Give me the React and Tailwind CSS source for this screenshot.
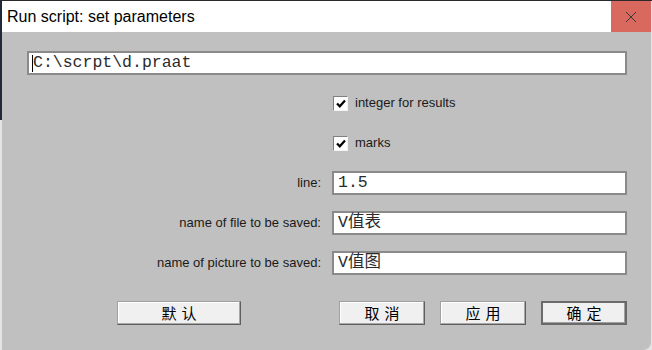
import { useState } from 'react';

const mono = { fontFamily: '"Liberation Mono", "Noto Sans CJK SC", monospace' };

function TextField({ value, caret }) {
  return (
    <div className="relative flex h-[24px] flex-1 items-center border-2 border-[#8a8a8a] bg-white pl-[4px]">
      {caret && <span className="absolute left-[3px] top-[2px] h-[17px] w-[1px] bg-black" />}
      <span className="text-[16.5px] leading-none text-[#2b2b2b]" style={mono}>
        {value}
      </span>
    </div>
  );
}

function Checkbox({ label }) {
  const [on, setOn] = useState(true);
  return (
    <div className="flex h-[24px] items-center pl-[306px]">
      <button
        onClick={() => setOn(!on)}
        className="flex h-[15px] w-[15px] items-center justify-center border border-t-[#808080] border-l-[#808080] border-b-[#f4f4f4] border-r-[#f4f4f4] bg-white"
      >
        {on && (
          <svg width="10" height="9" viewBox="0 0 10 9">
            <path d="M1 4.5 L3.8 7.3 L9 1.5" fill="none" stroke="#000" strokeWidth="2.2" />
          </svg>
        )}
      </button>
      <span className="ml-[7px] text-[13px] text-[#1a1a1a]">{label}</span>
    </div>
  );
}

function Row({ label, value }) {
  return (
    <div className="flex h-[24px] items-center">
      <span className="w-[294px] text-right text-[13px] text-[#1a1a1a]">{label}</span>
      <div className="ml-[11px] flex flex-1">
        <TextField value={value} />
      </div>
    </div>
  );
}

function Btn({ children, width, isDefault }) {
  return (
    <button
      className={
        'flex h-[24px] items-center justify-center bg-[#f0f0f0] text-[15px] text-black ' +
        width +
        (isDefault
          ? ' border-2 border-[#6a6a6a] shadow-[inset_-1px_-1px_0_#a0a0a0]'
          : ' border border-[#a0a0a0] border-b-[#5e5e5e] border-r-[#5e5e5e] shadow-[inset_-1px_-1px_0_#a8a8a8,inset_1px_1px_0_#ffffff]')
      }
      style={{ fontFamily: '"Noto Sans CJK SC", sans-serif', letterSpacing: '5px', paddingLeft: '5px' }}
    >
      {children}
    </button>
  );
}

export default function App() {
  return (
    <div
      className="relative h-[350px] w-[652px] overflow-hidden bg-[#e4e4e4]"
      style={{ fontFamily: '"Liberation Sans", Arial, sans-serif' }}
    >
      <div className="absolute left-0 top-0 h-[1px] w-full bg-[#2a2a2a]" />
      <div className="absolute left-0 top-0 h-[120px] w-[2px] bg-[#1e2a3a]" />
      <div className="ml-[2px] mt-[1px] flex h-[349px] w-[649px] flex-col overflow-hidden rounded-br-[8px] bg-[#c0c0c0]">
        {/* title bar */}
        <div className="flex h-[31px] shrink-0 items-center bg-white">
          <span className="pl-[5px] text-[16px] text-black">Run script: set parameters</span>
          <div className="ml-auto flex h-full w-[40px] items-center justify-center bg-[#d9695f]">
            <svg width="12" height="12" viewBox="0 0 12 12">
              <path d="M1 1 L11 11 M11 1 L1 11" stroke="#3a3a3a" strokeWidth="1" />
            </svg>
          </div>
        </div>

        {/* body */}
        <div className="flex flex-col gap-[16px] pl-[25px] pr-[24px] pt-[19px]">
          <div className="flex">
            <TextField value="C:\scrpt\d.praat" caret />
          </div>
          <Checkbox label="integer for results" />
          <Checkbox label="marks" />
          <Row label="line:" value="1.5" />
          <Row label="name of file to be saved:" value="V值表" />
          <Row label="name of picture to be saved:" value="V值图" />
        </div>

        <div className="mt-[26px] flex items-center pl-[115px] pr-[24px]">
          <Btn width="w-[124px]">默认</Btn>
          <div className="ml-auto flex gap-[15px]">
            <Btn width="w-[86px]">取消</Btn>
            <Btn width="w-[86px]">应用</Btn>
            <Btn width="w-[86px]" isDefault>
              确定
            </Btn>
          </div>
        </div>
      </div>
    </div>
  );
}
